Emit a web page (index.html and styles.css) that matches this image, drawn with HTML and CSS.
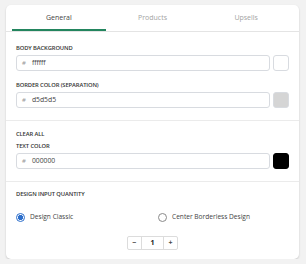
FILE: index.html
```html
<!DOCTYPE html>
<html lang="en">
<head>
  <meta charset="UTF-8">
  <meta name="viewport" content="width=device-width, initial-scale=1.0">
  <title>Quantity settings</title>
  <link rel="stylesheet" href="styles.css">
</head>
<body>
  <div class="card">
    <div class="tabs">
      <div class="tab active">General</div>
      <div class="tab">Products</div>
      <div class="tab">Upsells</div>
    </div>

    <div class="section first">
      <div class="label">Body background</div>
      <div class="color-row">
        <div class="color-input"><span class="hash">#</span>ffffff</div>
        <div class="swatch swatch-white"></div>
      </div>
      <div class="label label-gap">Border color (separation)</div>
      <div class="color-row">
        <div class="color-input"><span class="hash">#</span>d5d5d5</div>
        <div class="swatch swatch-gray"></div>
      </div>
    </div>

    <div class="section middle">
      <div class="label clear">Clear all</div>
      <div class="label">Text color</div>
      <div class="color-row">
        <div class="color-input"><span class="hash">#</span>000000</div>
        <div class="swatch swatch-black"></div>
      </div>
    </div>

    <div class="section last">
      <div class="label">Design input quantity</div>
      <div class="radios">
        <label class="radio"><span class="dot checked"></span>Design Classic</label>
        <label class="radio"><span class="dot"></span>Center Borderless Design</label>
      </div>
      <div class="stepper">
        <span class="step">&minus;</span>
        <span class="qty">1</span>
        <span class="step">+</span>
      </div>
    </div>
  </div>
</body>
</html>
```

FILE: styles.css
```css
/* page */
body {
  margin: 0;
  background: #f2f2f2;
  font-family: "Open Sans", "Liberation Sans", sans-serif;
  color: #333;
  line-height: 1;
}

/* card */
.card {
  width: 293px;
  margin: 5px 0 0 6px;
  background: #fff;
  border-radius: 5px;
  box-shadow: 0 1px 2px rgba(0, 0, 0, 0.18);
}

/* tabs */
.tabs {
  display: grid;
  grid-template-columns: 1fr 1fr 1fr;
  padding: 0 6px;
  border-bottom: 1px solid #e4e4e4;
}

.tab {
  height: 24px;
  line-height: 25px;
  text-align: center;
  font-size: 7px;
  color: #a3a3a3;
  border-bottom: 2px solid transparent;
}

.tab.active {
  color: #444;
  border-bottom-color: #23855e;
}

/* sections */
.section {
  padding: 0 10px 12px;
  border-bottom: 1px solid #ebebeb;
}

.section.first { padding-top: 12px; }
.section.middle { padding-top: 9px; }

.section.last {
  border-bottom: none;
  padding-top: 8px;
  padding-bottom: 9px;
}

.label {
  height: 8px;
  font-size: 5.8px;
  line-height: 8px;
  font-weight: 600;
  text-transform: uppercase;
  color: #333;
  margin-bottom: 3px;
  letter-spacing: -0.1px;
}

.label-gap {
  margin-top: 10px;
}

.clear {
  margin-bottom: 4px;
}

/* colour inputs */
.color-row {
  display: flex;
  gap: 3px;
  height: 16px;
}

.color-input {
  flex: 1;
  display: flex;
  align-items: center;
  box-sizing: border-box;
  height: 16px;
  border: 1px solid #d8dbe0;
  border-radius: 3px;
  font-size: 6.8px;
  color: #444;
  padding-left: 5px;
}

.hash {
  color: #999;
  margin-right: 6px;
  font-size: 6px;
}

.swatch {
  width: 16px;
  height: 16px;
  box-sizing: border-box;
  border: 1px solid #d8dbe0;
  border-radius: 3px;
}

.swatch-white { background: #fff; }
.swatch-gray { background: #d5d5d5; }
.swatch-black { background: #000; border-color: #000; }

/* radios */
.radios {
  display: grid;
  grid-template-columns: 142px 1fr;
  margin-top: 14px;
}

.radio {
  display: flex;
  align-items: center;
  gap: 5px;
  font-size: 6.6px;
  color: #444;
  height: 10px;
}

.dot {
  width: 7px;
  height: 7px;
  border: 1px solid #8a8a8a;
  border-radius: 50%;
}

.dot.checked {
  border-color: #2c6ecb;
  background: radial-gradient(circle, #2c6ecb 0 2.4px, #fff 2.9px);
}

/* quantity stepper */
.stepper {
  display: flex;
  width: max-content;
  margin: 14px auto 0;
  border: 1px solid #dcdcdc;
  border-radius: 2px;
  height: 12px;
  font-size: 7px;
  line-height: 12px;
  font-weight: 700;
}

.step {
  width: 13px;
  text-align: center;
  color: #444;
}

.qty {
  width: 21px;
  text-align: center;
  border-left: 1px solid #dcdcdc;
  border-right: 1px solid #dcdcdc;
  color: #222;
}
```
